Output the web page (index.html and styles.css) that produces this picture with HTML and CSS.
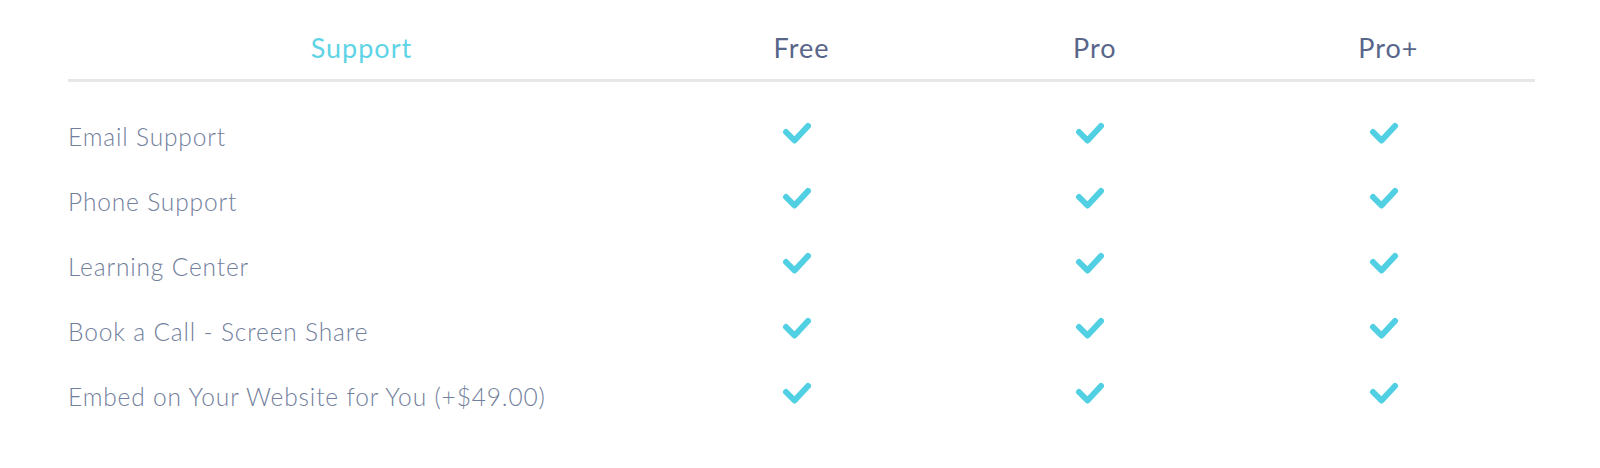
FILE: index.html
```html
<!DOCTYPE html>
<html lang="en">
<head>
<meta charset="utf-8">
<title>Support comparison</title>
<link rel="stylesheet" href="styles.css">
</head>
<body>
<div class="pricing">
  <div class="head">
    <div class="col-title accent">Support</div>
    <div class="col-title">Free</div>
    <div class="col-title">Pro</div>
    <div class="col-title">Pro+</div>
  </div>
  <div class="body">
    <div class="row">
      <div class="feature">Email Support</div>
      <div class="cell"><svg class="check" viewBox="0 0 30 23"><polyline points="4,10 12.5,18.5 26,4"/></svg></div>
      <div class="cell"><svg class="check" viewBox="0 0 30 23"><polyline points="4,10 12.5,18.5 26,4"/></svg></div>
      <div class="cell"><svg class="check" viewBox="0 0 30 23"><polyline points="4,10 12.5,18.5 26,4"/></svg></div>
    </div>
    <div class="row">
      <div class="feature">Phone Support</div>
      <div class="cell"><svg class="check" viewBox="0 0 30 23"><polyline points="4,10 12.5,18.5 26,4"/></svg></div>
      <div class="cell"><svg class="check" viewBox="0 0 30 23"><polyline points="4,10 12.5,18.5 26,4"/></svg></div>
      <div class="cell"><svg class="check" viewBox="0 0 30 23"><polyline points="4,10 12.5,18.5 26,4"/></svg></div>
    </div>
    <div class="row">
      <div class="feature">Learning Center</div>
      <div class="cell"><svg class="check" viewBox="0 0 30 23"><polyline points="4,10 12.5,18.5 26,4"/></svg></div>
      <div class="cell"><svg class="check" viewBox="0 0 30 23"><polyline points="4,10 12.5,18.5 26,4"/></svg></div>
      <div class="cell"><svg class="check" viewBox="0 0 30 23"><polyline points="4,10 12.5,18.5 26,4"/></svg></div>
    </div>
    <div class="row">
      <div class="feature">Book a Call - Screen Share</div>
      <div class="cell"><svg class="check" viewBox="0 0 30 23"><polyline points="4,10 12.5,18.5 26,4"/></svg></div>
      <div class="cell"><svg class="check" viewBox="0 0 30 23"><polyline points="4,10 12.5,18.5 26,4"/></svg></div>
      <div class="cell"><svg class="check" viewBox="0 0 30 23"><polyline points="4,10 12.5,18.5 26,4"/></svg></div>
    </div>
    <div class="row">
      <div class="feature">Embed on Your Website for You (+$49.00)</div>
      <div class="cell"><svg class="check" viewBox="0 0 30 23"><polyline points="4,10 12.5,18.5 26,4"/></svg></div>
      <div class="cell"><svg class="check" viewBox="0 0 30 23"><polyline points="4,10 12.5,18.5 26,4"/></svg></div>
      <div class="cell"><svg class="check" viewBox="0 0 30 23"><polyline points="4,10 12.5,18.5 26,4"/></svg></div>
    </div>
  </div>
</div>
</body>
</html>
```

FILE: styles.css
```css
html, body {
  margin: 0;
  padding: 0;
  background: #ffffff;
}

body {
  font-family: Lato, "Open Sans", sans-serif;
}

.pricing {
  margin: 0 65px 0 68px;
}

.head {
  display: grid;
  grid-template-columns: 40% 20% 20% 20%;
  padding: 32px 0 15px;
  border-bottom: 3px solid #e7e7e7;
}

.col-title {
  text-align: center;
  font-size: 27px;
  line-height: 32px;
  font-weight: 400;
  letter-spacing: 1px;
  color: #58668a;
}

.col-title.accent {
  color: #5ed4e6;
}

.body {
  padding-top: 22px;
}

.row {
  display: grid;
  grid-template-columns: 40% 20% 20% 20%;
  height: 65px;
  align-items: center;
}

.feature {
  font-size: 24.5px;
  line-height: 29px;
  font-weight: 300;
  letter-spacing: 0.85px;
  color: #72809c;
}

.cell {
  display: flex;
  justify-content: center;
  align-items: center;
}

.check {
  width: 30px;
  height: 23px;
  margin: 0 9px 7px 0;
  fill: none;
  stroke: #52d0e3;
  stroke-width: 6;
  stroke-linecap: round;
  stroke-linejoin: round;
}
```
